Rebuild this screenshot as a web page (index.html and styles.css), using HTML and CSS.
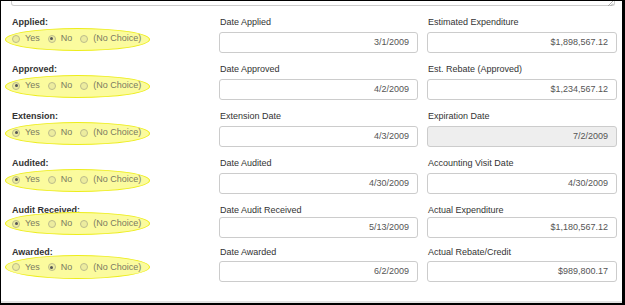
FILE: index.html
```html
<!DOCTYPE html>
<html>
<head>
<meta charset="utf-8">
<link rel="stylesheet" href="styles.css">
</head>
<body>
<div class="frame">
  <div class="notes">
    <svg class="grip" width="6" height="5" viewBox="0 0 6 5"><path d="M1 5 L6 0 M3.5 5 L6 2.5" stroke="#999" stroke-width="0.8" fill="none"/></svg>
  </div>
  <div class="form">
    <div class="row">
      <div class="field">
        <div class="lbl bold">Applied:</div>
        <div class="radios"><span class="opt"><span class="radio"></span>Yes</span><span class="opt"><span class="radio on"></span>No</span><span class="opt"><span class="radio"></span>(No Choice)</span></div>
      </div>
      <div class="field"><div class="lbl">Date Applied</div><div class="input">3/1/2009</div></div>
      <div class="field"><div class="lbl">Estimated Expenditure</div><div class="input">$1,898,567.12</div></div>
    </div>
    <div class="row">
      <div class="field">
        <div class="lbl bold">Approved:</div>
        <div class="radios"><span class="opt"><span class="radio on"></span>Yes</span><span class="opt"><span class="radio"></span>No</span><span class="opt"><span class="radio"></span>(No Choice)</span></div>
      </div>
      <div class="field"><div class="lbl">Date Approved</div><div class="input">4/2/2009</div></div>
      <div class="field"><div class="lbl">Est. Rebate (Approved)</div><div class="input">$1,234,567.12</div></div>
    </div>
    <div class="row">
      <div class="field">
        <div class="lbl bold">Extension:</div>
        <div class="radios"><span class="opt"><span class="radio on"></span>Yes</span><span class="opt"><span class="radio"></span>No</span><span class="opt"><span class="radio"></span>(No Choice)</span></div>
      </div>
      <div class="field"><div class="lbl">Extension Date</div><div class="input">4/3/2009</div></div>
      <div class="field"><div class="lbl">Expiration Date</div><div class="input disabled">7/2/2009</div></div>
    </div>
    <div class="row">
      <div class="field">
        <div class="lbl bold">Audited:</div>
        <div class="radios"><span class="opt"><span class="radio on"></span>Yes</span><span class="opt"><span class="radio"></span>No</span><span class="opt"><span class="radio"></span>(No Choice)</span></div>
      </div>
      <div class="field"><div class="lbl">Date Audited</div><div class="input">4/30/2009</div></div>
      <div class="field"><div class="lbl">Accounting Visit Date</div><div class="input">4/30/2009</div></div>
    </div>
    <div class="row compact">
      <div class="field">
        <div class="lbl bold">Audit Received:</div>
        <div class="radios"><span class="opt"><span class="radio on"></span>Yes</span><span class="opt"><span class="radio"></span>No</span><span class="opt"><span class="radio"></span>(No Choice)</span></div>
      </div>
      <div class="field"><div class="lbl">Date Audit Received</div><div class="input">5/13/2009</div></div>
      <div class="field"><div class="lbl">Actual Expenditure</div><div class="input">$1,180,567.12</div></div>
    </div>
    <div class="row compact last">
      <div class="field">
        <div class="lbl bold">Awarded:</div>
        <div class="radios"><span class="opt"><span class="radio"></span>Yes</span><span class="opt"><span class="radio on"></span>No</span><span class="opt"><span class="radio"></span>(No Choice)</span></div>
      </div>
      <div class="field"><div class="lbl">Date Awarded</div><div class="input">6/2/2009</div></div>
      <div class="field"><div class="lbl">Actual Rebate/Credit</div><div class="input">$989,800.17</div></div>
    </div>
  </div>
  <div class="footbar"></div>
</div>
</body>
</html>
```
FILE: styles.css
```css
* { box-sizing: border-box; }
html, body { margin: 0; padding: 0; background: #fff; }
body {
  font-family: "Liberation Sans", Arial, sans-serif;
  font-size: 9px;
  color: #333;
}
.frame {
  width: 625px;
  height: 305px;
  border-style: solid;
  border-color: #000;
  border-width: 1px 3px 2px 1px;
  display: flex;
  flex-direction: column;
  background: #fff;
}
.notes {
  margin-left: 10px;
  width: 604px;
  height: 5px;
  border: 1px solid #ccc;
  border-top: none;
  border-radius: 0 0 3px 3px;
  display: flex;
  justify-content: flex-end;
  align-items: flex-start;
}
.grip { margin-right: 1px; }
.form {
  flex: 1;
  padding: 11px 0 0 11px;
  display: flex;
  flex-direction: column;
  gap: 11px;
}
.row {
  display: grid;
  grid-template-columns: 198px 199px 190px;
  column-gap: 9px;
}
.field { display: flex; flex-direction: column; }
.lbl {
  line-height: 11px;
  height: 11px;
  white-space: nowrap;
  padding-left: 1px;
}
.lbl.bold { font-weight: bold; padding-left: 0; }
.input {
  margin-top: 4px;
  height: 21px;
  border: 1px solid #ccc;
  border-radius: 3px;
  color: #555;
  text-align: right;
  padding: 0 8px 0 0;
  line-height: 19px;
}
.input.disabled { background: #eee; }
.radios {
  margin-left: -7px;
  width: 145px;
  height: 23px;
  border-radius: 50%;
  background: #fbfb9e;
  border: 1px solid #eded1c;
  display: flex;
  align-items: center;
  padding: 0 0 2px 6px;
  gap: 8px;
  color: #7a7a62;
  position: relative;
  z-index: 0;
}
.opt { display: flex; align-items: center; gap: 5px; line-height: 11px; }
.radio {
  width: 8px;
  height: 8px;
  border-radius: 50%;
  border: 1px solid #bcbc8c;
  background: #ecec9e;
  display: flex;
  align-items: center;
  justify-content: center;
}
.radio.on::after {
  content: "";
  width: 3px;
  height: 3px;
  border-radius: 50%;
  background: #555;
}
.compact .input { margin-top: 1px; }
.compact .radios { margin-top: -4px; padding-bottom: 0; }
.compact.last { margin-top: -2px; }
.compact.last .input { margin-top: 3px; }
.compact.last .radios { margin-top: -3px; height: 24px; }
.footbar {
  height: 2px;
  background: #e3e3e3;
}
```
